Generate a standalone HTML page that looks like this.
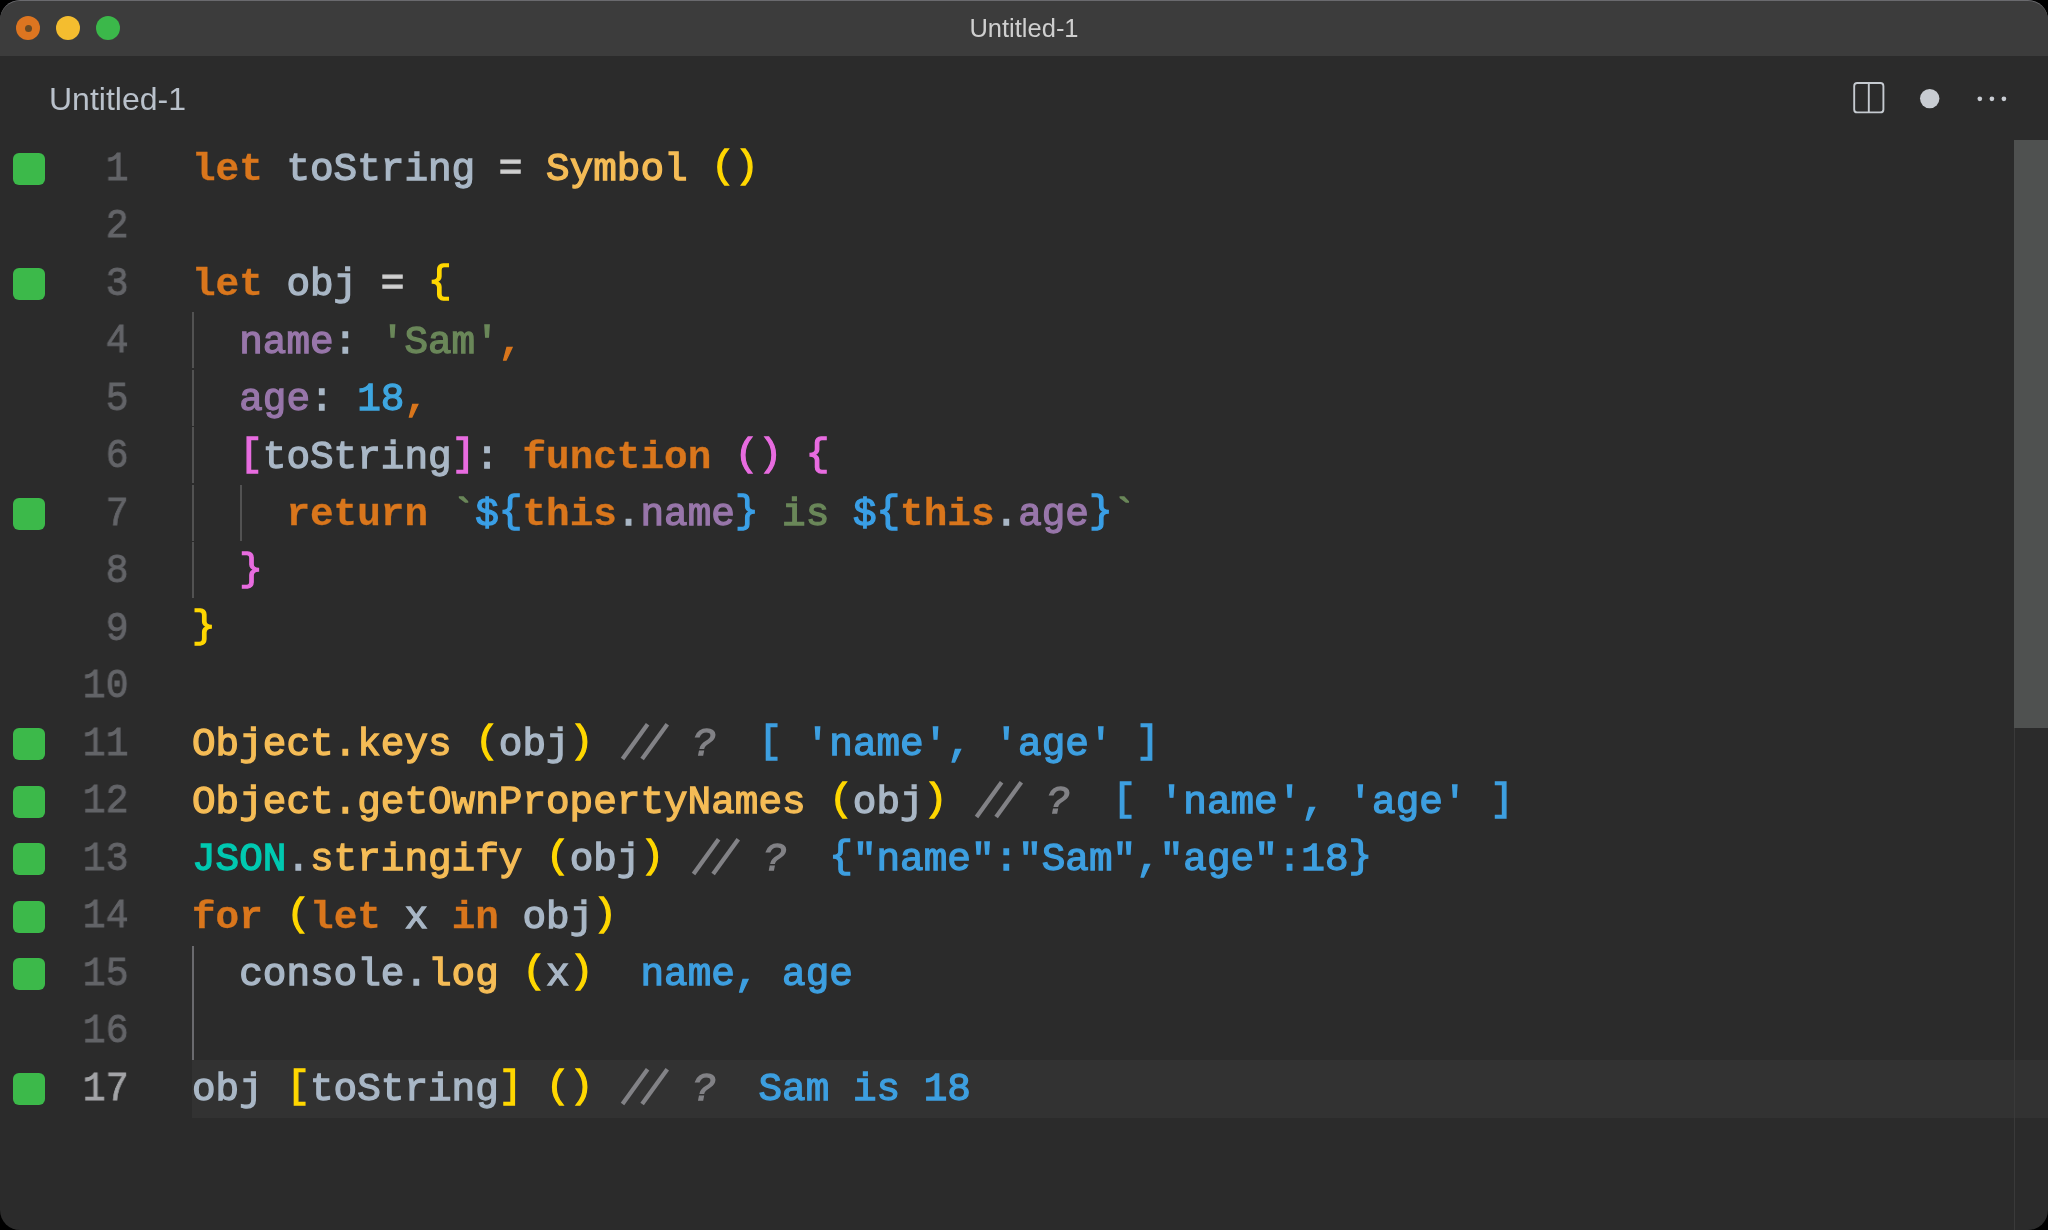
<!DOCTYPE html>
<html><head><meta charset="utf-8"><style>
html,body{margin:0;padding:0;background:#000;width:2048px;height:1230px;overflow:hidden}
#win{position:absolute;left:0;top:0;width:2048px;height:1230px;border-radius:20px;overflow:hidden;background:#2b2b2b}
#title{position:absolute;left:0;top:0;width:2048px;height:56px;background:#3c3c3c}
#edge{position:absolute;left:0;top:0;width:2048px;height:1230px;border-radius:20px;border-top:1.6px solid #6a6a6e;box-sizing:border-box;z-index:5}
.tl{position:absolute;width:24px;height:24px;border-radius:50%}
#ttext{will-change:transform;position:absolute;left:0;top:0;width:2048px;height:56px;text-align:center;font-family:"Liberation Sans",sans-serif;font-size:25.5px;line-height:56px;color:#cfcfcf}
#tab{will-change:transform;position:absolute;left:49px;top:74px;font-family:"Liberation Sans",sans-serif;font-size:32px;color:#b9c1cb;line-height:50px}
.ln{position:absolute;left:0;width:128.5px;-webkit-text-stroke:0.9px currentColor;text-align:right;font-family:"Liberation Mono",monospace;font-size:41px;will-change:transform;transform:scaleX(0.93);transform-origin:128.5px 0;line-height:57.5px;height:57.5px;color:#636468;white-space:pre}
.code{position:absolute;left:192px;font-family:"Liberation Mono",monospace;font-size:39.33px;line-height:57.5px;height:57.5px;white-space:pre;-webkit-text-stroke:1.3px currentColor;will-change:transform}
.sq{position:absolute;left:13px;width:32px;height:32px;border-radius:6px;background:#3cb94a}
.g{position:absolute;width:2px}
.kw{color:#d9761c;font-weight:bold;-webkit-text-stroke:0.3px currentColor}
.var{color:#a9b7c6}.fn{color:#f5bc56}.u{position:relative;top:-3.5px}.b1{color:#ffd700}.b2{color:#e86ce0}.b3{color:#3a9fe6}
.prop{color:#9876aa}.str{color:#6a8759}.num{color:#3ea6e0}.cm{color:#808080;font-style:italic}.q{color:#828286;font-style:italic;position:relative;left:4.5px;-webkit-text-stroke:1.4px currentColor}
.op{color:#d0d0d0}.json{color:#00c9b1}.deco{color:#3d9fe0}.punc{color:#d9761c;-webkit-text-stroke:1.3px currentColor}
</style></head><body><div id="win">

<div id="title"></div>
<div class="tl" style="left:16px;top:16px;background:#dd7520"><div style="position:absolute;left:8.5px;top:8.5px;width:7px;height:7px;border-radius:50%;background:#6a4a25"></div></div>
<div class="tl" style="left:56px;top:16px;background:#f4bd2f"></div>
<div class="tl" style="left:96px;top:16px;background:#3bb84a"></div>
<div id="ttext">Untitled-1</div>
<div id="tab">Untitled-1</div>
<svg style="position:absolute;left:1840px;top:70px" width="190" height="58" viewBox="1840 70 190 58">
<rect x="1854.2" y="83" width="29.2" height="29.4" rx="3" fill="none" stroke="#c5cad0" stroke-width="1.9"/>
<line x1="1868.8" y1="83" x2="1868.8" y2="112.4" stroke="#c5cad0" stroke-width="1.9"/>
<circle cx="1929.7" cy="98.6" r="9.7" fill="#c8ccd2"/>
<circle cx="1979.8" cy="98.8" r="2.35" fill="#c8ccd2"/>
<circle cx="1991.9" cy="98.8" r="2.35" fill="#c8ccd2"/>
<circle cx="2003.9" cy="98.8" r="2.35" fill="#c8ccd2"/>
</svg>
<div style="position:absolute;left:192px;top:1060.2px;width:1856px;height:57.6px;background:#323232"></div>
<div style="position:absolute;left:2014px;top:140px;width:1px;height:1090px;background:#3a3a3a"></div>
<div style="position:absolute;left:2014px;top:140px;width:34px;height:588px;background:#4f5150"></div>
<div class="g" style="left:192px;top:312.2px;height:56.0px;background:#525252"></div>
<div class="g" style="left:192px;top:369.7px;height:56.0px;background:#525252"></div>
<div class="g" style="left:192px;top:427.2px;height:56.0px;background:#525252"></div>
<div class="g" style="left:192px;top:484.7px;height:56.0px;background:#525252"></div>
<div class="g" style="left:192px;top:542.2px;height:56.0px;background:#525252"></div>
<div class="g" style="left:240px;top:484.7px;height:56.0px;background:#525252"></div>
<div class="g" style="left:192px;top:945.8px;height:114.2px;background:#6a6a6e"></div>
<div class="ln" style="top:140.9px;color:#636468">1</div>
<div class="sq" style="top:152.9px"></div>
<div class="code" style="top:141.2px"><span class="kw">let</span><span class="var"> toString </span><span class="op">=</span><span class="var"> </span><span class="fn">Symbol</span><span class="var"> </span><span class="b1"><span class="u">(</span><span class="u">)</span></span></div>
<div class="ln" style="top:198.4px;color:#636468">2</div>
<div class="code" style="top:198.7px"></div>
<div class="ln" style="top:255.9px;color:#636468">3</div>
<div class="sq" style="top:267.9px"></div>
<div class="code" style="top:256.2px"><span class="kw">let</span><span class="var"> obj </span><span class="op">=</span><span class="var"> </span><span class="b1"><span class="u">{</span></span></div>
<div class="ln" style="top:313.4px;color:#636468">4</div>
<div class="code" style="top:313.7px"><span class="var">  </span><span class="prop">name</span><span class="var">: </span><span class="str">&#x27;Sam&#x27;</span><span class="punc">,</span></div>
<div class="ln" style="top:370.9px;color:#636468">5</div>
<div class="code" style="top:371.2px"><span class="var">  </span><span class="prop">age</span><span class="var">: </span><span class="num">18</span><span class="punc">,</span></div>
<div class="ln" style="top:428.4px;color:#636468">6</div>
<div class="code" style="top:428.7px"><span class="var">  </span><span class="b2"><span class="u">[</span></span><span class="var">toString</span><span class="b2"><span class="u">]</span></span><span class="var">: </span><span class="kw">function</span><span class="var"> </span><span class="b2"><span class="u">(</span><span class="u">)</span></span><span class="var"> </span><span class="b2"><span class="u">{</span></span></div>
<div class="ln" style="top:485.9px;color:#636468">7</div>
<div class="sq" style="top:498.0px"></div>
<div class="code" style="top:486.2px"><span class="var">    </span><span class="kw">return</span><span class="var"> </span><span class="str">`</span><span class="b3">$<span class="u">{</span></span><span class="kw">this</span><span class="var">.</span><span class="prop">name</span><span class="b3"><span class="u">}</span></span><span class="str"> is </span><span class="b3">$<span class="u">{</span></span><span class="kw">this</span><span class="var">.</span><span class="prop">age</span><span class="b3"><span class="u">}</span></span><span class="str">`</span></div>
<div class="ln" style="top:543.4px;color:#636468">8</div>
<div class="code" style="top:543.7px"><span class="var">  </span><span class="b2"><span class="u">}</span></span></div>
<div class="ln" style="top:600.9px;color:#636468">9</div>
<div class="code" style="top:601.2px"><span class="b1"><span class="u">}</span></span></div>
<div class="ln" style="top:658.4px;color:#636468">10</div>
<div class="code" style="top:658.7px"></div>
<div class="ln" style="top:715.9px;color:#636468">11</div>
<div class="sq" style="top:728.0px"></div>
<svg style="position:absolute;left:616.8px;top:715.2px" width="60" height="57.5" viewBox="0 0 60 57.5"><g stroke="#828286" stroke-width="4.3" stroke-linecap="butt"><line x1="5.5" y1="44" x2="30.6" y2="9.2"/><line x1="25.1" y1="44" x2="50.3" y2="9.2"/></g></svg>
<div class="code" style="top:716.2px"><span class="fn">Object.keys</span><span class="var"> </span><span class="b1"><span class="u">(</span></span><span class="var">obj</span><span class="b1"><span class="u">)</span></span><span class="var"> </span><span class="cm">   </span><span class="q">?</span><span class="var">  </span><span class="deco"><span class="u">[</span> &#x27;name&#x27;, &#x27;age&#x27; <span class="u">]</span></span></div>
<div class="ln" style="top:773.4px;color:#636468">12</div>
<div class="sq" style="top:785.5px"></div>
<svg style="position:absolute;left:970.8px;top:772.7px" width="60" height="57.5" viewBox="0 0 60 57.5"><g stroke="#828286" stroke-width="4.3" stroke-linecap="butt"><line x1="5.5" y1="44" x2="30.6" y2="9.2"/><line x1="25.1" y1="44" x2="50.3" y2="9.2"/></g></svg>
<div class="code" style="top:773.7px"><span class="fn">Object.getOwnPropertyNames</span><span class="var"> </span><span class="b1"><span class="u">(</span></span><span class="var">obj</span><span class="b1"><span class="u">)</span></span><span class="var"> </span><span class="cm">   </span><span class="q">?</span><span class="var">  </span><span class="deco"><span class="u">[</span> &#x27;name&#x27;, &#x27;age&#x27; <span class="u">]</span></span></div>
<div class="ln" style="top:830.9px;color:#636468">13</div>
<div class="sq" style="top:843.0px"></div>
<svg style="position:absolute;left:687.6px;top:830.2px" width="60" height="57.5" viewBox="0 0 60 57.5"><g stroke="#828286" stroke-width="4.3" stroke-linecap="butt"><line x1="5.5" y1="44" x2="30.6" y2="9.2"/><line x1="25.1" y1="44" x2="50.3" y2="9.2"/></g></svg>
<div class="code" style="top:831.2px"><span class="json">JSON</span><span class="var">.</span><span class="fn">stringify</span><span class="var"> </span><span class="b1"><span class="u">(</span></span><span class="var">obj</span><span class="b1"><span class="u">)</span></span><span class="var"> </span><span class="cm">   </span><span class="q">?</span><span class="var">  </span><span class="deco"><span class="u">{</span>&quot;name&quot;:&quot;Sam&quot;,&quot;age&quot;:18<span class="u">}</span></span></div>
<div class="ln" style="top:888.4px;color:#636468">14</div>
<div class="sq" style="top:900.5px"></div>
<div class="code" style="top:888.7px"><span class="kw">for</span><span class="var"> </span><span class="b1"><span class="u">(</span></span><span class="kw">let</span><span class="var"> x </span><span class="kw">in</span><span class="var"> obj</span><span class="b1"><span class="u">)</span></span></div>
<div class="ln" style="top:945.9px;color:#636468">15</div>
<div class="sq" style="top:958.0px"></div>
<div class="code" style="top:946.2px"><span class="var">  console.</span><span class="fn">log</span><span class="var"> </span><span class="b1"><span class="u">(</span></span><span class="var">x</span><span class="b1"><span class="u">)</span></span><span class="var">  </span><span class="deco">name, age</span></div>
<div class="ln" style="top:1003.4px;color:#636468">16</div>
<div class="code" style="top:1003.7px"></div>
<div class="ln" style="top:1060.9px;color:#a3a4a7">17</div>
<div class="sq" style="top:1073.0px"></div>
<svg style="position:absolute;left:616.8px;top:1060.2px" width="60" height="57.5" viewBox="0 0 60 57.5"><g stroke="#828286" stroke-width="4.3" stroke-linecap="butt"><line x1="5.5" y1="44" x2="30.6" y2="9.2"/><line x1="25.1" y1="44" x2="50.3" y2="9.2"/></g></svg>
<div class="code" style="top:1061.2px"><span class="var">obj </span><span class="b1"><span class="u">[</span></span><span class="var">toString</span><span class="b1"><span class="u">]</span></span><span class="var"> </span><span class="b1"><span class="u">(</span><span class="u">)</span></span><span class="var"> </span><span class="cm">   </span><span class="q">?</span><span class="var">  </span><span class="deco">Sam is 18</span></div>
<div id="edge"></div>
</div></body></html>
